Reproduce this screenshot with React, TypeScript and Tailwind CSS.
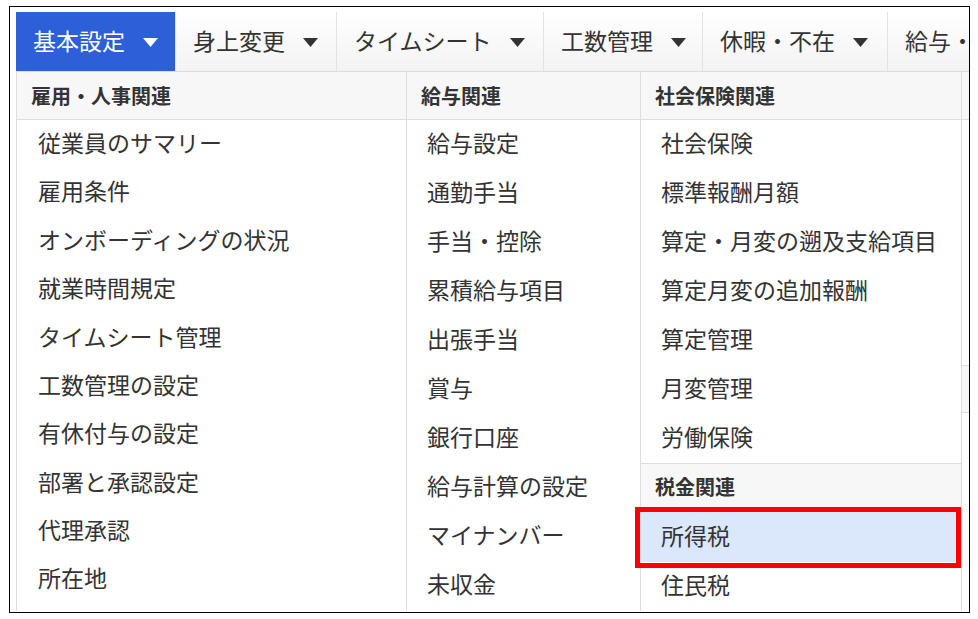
const font = { fontFamily: '"Noto Sans CJK JP", "Noto Sans", sans-serif' };

const navItems = [
  { label: "基本設定", active: true, w: "w-[160px]" },
  { label: "身上変更", w: "w-[161px]" },
  { label: "タイムシート", w: "w-[207px]" },
  { label: "工数管理", w: "w-[159px]" },
  { label: "休暇・不在", w: "w-[185px]" },
  { label: "給与・明細", w: "w-[180px]" },
];

const col1 = [
  "従業員のサマリー",
  "雇用条件",
  "オンボーディングの状況",
  "就業時間規定",
  "タイムシート管理",
  "工数管理の設定",
  "有休付与の設定",
  "部署と承認設定",
  "代理承認",
  "所在地",
];

const col2 = [
  "給与設定",
  "通勤手当",
  "手当・控除",
  "累積給与項目",
  "出張手当",
  "賞与",
  "銀行口座",
  "給与計算の設定",
  "マイナンバー",
  "未収金",
];

const col3 = [
  "社会保険",
  "標準報酬月額",
  "算定・月変の遡及支給項目",
  "算定月変の追加報酬",
  "算定管理",
  "月変管理",
  "労働保険",
];

const Caret = ({ white }: { white?: boolean }) => (
  <svg width="15" height="9" viewBox="0 0 15 9" className="ml-[18px] mt-[3px] shrink-0">
    <polygon points="0,0 15,0 7.5,9" fill={white ? "#ffffff" : "#333333"} />
  </svg>
);

const Header = ({ children, top }: { children?: React.ReactNode; top?: boolean }) => (
  <div
    className={`h-[48px] flex items-center px-[14px] bg-[#f7f7f7] border-b border-[#dddddd] text-[20px] font-bold text-[#333] ${
      top ? "" : "border-t"
    }`}
  >
    {children}
  </div>
);

export default function App() {
  return (
    <div className="w-[978px] h-[619px] bg-white overflow-hidden" style={font}>
      <div className="ml-[9px] mt-[6px] w-[961px] h-[607px] border border-black overflow-hidden pl-[6px] pt-[5px] relative">
        {/* top nav */}
        <div className="flex h-[60px] w-[1200px] border-b border-[#dddddd]">
          {navItems.map((n) => (
            <div
              key={n.label}
              className={`${n.w} shrink-0 flex items-center pl-[17px] pb-[2px] text-[23px] border-r border-[#e3e3e3] ${
                n.active
                  ? "bg-[#2c5fd8] text-white"
                  : "bg-gradient-to-b from-white to-[#f3f3f3] text-[#333]"
              }`}
            >
              <span className="whitespace-nowrap">{n.label}</span>
              <Caret white={n.active} />
            </div>
          ))}
        </div>

        {/* dropdown panel */}
        <div className="flex w-[1200px] text-[#333] border-l border-[#dddddd]">
          <div className="w-[390px] shrink-0 border-r border-[#dddddd]">
            <Header top>雇用・人事関連</Header>
            {col1.map((t) => (
              <div key={t} className="h-[48.4px] flex items-center pl-[21px] pb-[4px] text-[23px]">
                {t}
              </div>
            ))}
          </div>

          <div className="w-[234px] shrink-0 border-r border-[#dddddd]">
            <Header top>給与関連</Header>
            {col2.map((t) => (
              <div key={t} className="h-[49px] flex items-center pl-[20px] pb-[4px] text-[23px]">
                {t}
              </div>
            ))}
          </div>

          <div className="w-[321px] shrink-0 border-r border-[#dddddd]">
            <Header top>社会保険関連</Header>
            {col3.map((t) => (
              <div key={t} className="h-[49px] flex items-center pl-[20px] pb-[4px] text-[23px]">
                {t}
              </div>
            ))}
            <Header>税金関連</Header>
            <div className="h-[51px] flex items-center pl-[20px] pb-[2px] text-[23px] bg-[#dbe7fa]">所得税</div>
            <div className="h-[49px] flex items-center pl-[20px] pb-[4px] text-[23px]">住民税</div>
          </div>

          <div className="w-[200px] shrink-0">
            <Header top>&nbsp;</Header>
            <div className="h-[245px]" />
            <Header>&nbsp;</Header>
          </div>
        </div>

        {/* red highlight frame */}
        <div className="absolute left-[625px] top-[500px] w-[326px] h-[61px] border-[5px] border-[#ff0000]" />
      </div>
    </div>
  );
}
